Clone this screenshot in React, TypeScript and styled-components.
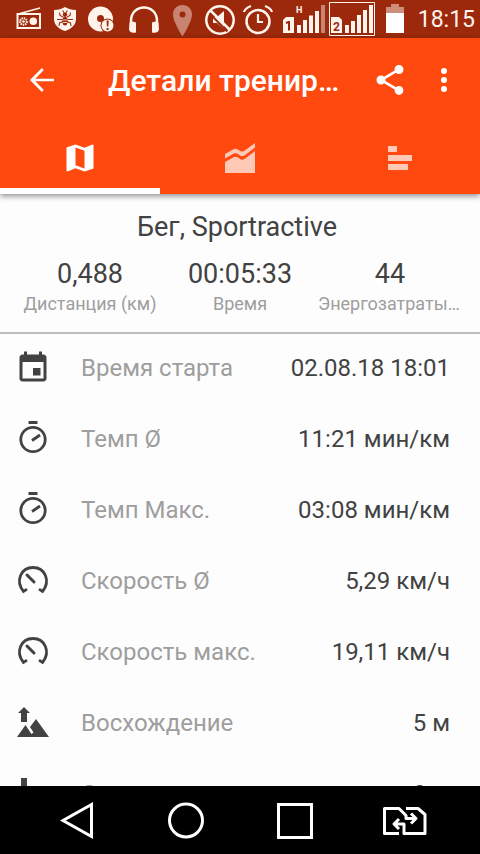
import React from "react";
import styled, { createGlobalStyle } from "styled-components";

const GlobalStyle = createGlobalStyle`
  * { box-sizing: border-box; }
  html, body { margin: 0; padding: 0; }
  body { font-family: Roboto, "Noto Sans", sans-serif; background: #fff; }
  button { font: inherit; color: inherit; background: none; border: 0; padding: 0; margin: 0; cursor: pointer; }
  svg { display: block; flex: none; }
`;

const Screen = styled.div`
  display: flex;
  flex-direction: column;
  height: 100vh;
  overflow: hidden;
  background: #fdfdfd;
  color: #424242;
`;

const StatusBar = styled.div`
  flex: none;
  display: flex;
  align-items: center;
  justify-content: space-between;
  height: 38px;
  padding: 0 5px 0 12px;
  background: #9c290b;
  color: #fff4ec;
`;

const StatusIcons = styled.div`
  display: flex;
`;

const Clock = styled.time`
  padding-top: 2px;
  font-size: 23px;
  line-height: 36px;
`;

const Header = styled.header`
  flex: none;
  position: relative;
  background: #ff490f;
  color: #fff;
  box-shadow: 0 2px 6px rgba(0, 0, 0, 0.45);
`;

const Toolbar = styled.div`
  display: flex;
  align-items: center;
  height: 84px;
  padding: 0 9px 0 15px;
`;

const IconButton = styled.button`
  flex: none;
  display: grid;
  place-items: center;
  width: 54px;
  height: 54px;
`;

const Title = styled.h1`
  flex: 1;
  min-width: 0;
  margin: 0 18px 0 39px;
  padding-top: 2px;
  font-size: 30px;
  line-height: 36px;
  font-weight: 500;
  white-space: nowrap;
  overflow: hidden;
  text-overflow: ellipsis;
`;

const Tabs = styled.div`
  display: grid;
  grid-template-columns: repeat(3, 1fr);
  height: 72px;
`;

const Tab = styled.button<{ $active?: boolean }>`
  display: grid;
  place-items: center;
  border-top: 6px solid transparent;
  border-bottom: 6px solid ${(p) => (p.$active ? "#fff" : "transparent")};

  svg { opacity: ${(p) => (p.$active ? 1 : 0.7)}; }
`;

const Summary = styled.section`
  flex: none;
  padding: 15px 0 16px;
  border-bottom: 2px solid #bdbdbd;
  text-align: center;
`;

const SummaryTitle = styled.h2`
  margin: 0 0 11px;
  padding-right: 6px;
  font-size: 27px;
  line-height: 36px;
  font-weight: 400;
`;

const Stats = styled.dl`
  display: grid;
  grid-template-columns: repeat(3, minmax(0, 1fr));
  margin: 0;
  padding: 0 15px;
`;

const Stat = styled.div`
  display: flex;
  flex-direction: column-reverse;
  min-width: 0;
`;

const StatLabel = styled.dt`
  font-size: 18px;
  line-height: 24px;
  color: #9e9e9e;
  padding: 0 3px;
  white-space: nowrap;
  overflow: hidden;
  text-overflow: ellipsis;
`;

const StatValue = styled.dd`
  margin: 0;
  font-size: 27px;
  line-height: 36px;
`;

const Details = styled.dl`
  flex: 1;
  min-height: 0;
  margin: 0;
  overflow: hidden;
`;

const DetailRow = styled.div`
  display: flex;
  align-items: center;
  height: 71px;
  padding: 0 30px 4px 15px;
  font-size: 24px;
  line-height: 36px;
`;

const DetailLabel = styled.dt`
  flex: 1;
  margin-left: 30px;
  color: #9e9e9e;
`;

const DetailValue = styled.dd`
  margin: 0;
`;

const NavBar = styled.nav`
  flex: none;
  display: grid;
  grid-template-columns: repeat(4, 1fr);
  height: 68px;
  padding: 0 22px;
  background: #000;
  color: #fff;
`;

const NavButton = styled.button`
  display: grid;
  place-items: center;
`;

type StatusProps = { x: number; w: number; children: React.ReactNode };

const StatusIcon = ({ x, w, children }: StatusProps) => (
  <svg width={w} height={38} viewBox={`${x} 0 ${w} 38`} fill="currentColor" aria-hidden="true">
    {children}
  </svg>
);

const stroke = (width: number) => ({ fill: "none", stroke: "currentColor", strokeWidth: width });

const StatusGlyphs = () => (
  <StatusIcons>
    <StatusIcon x={12} w={35}>
      <path d="M17.500 14h22.500v14h-22.500z" {...stroke(2)} />
      <path d="M20 13.500L40 8" {...stroke(1.500)} />
      <circle cx="23.500" cy="21.500" r="3.300" {...stroke(2)} strokeDasharray="1.500 .7" />
      <circle cx="23.500" cy="21.500" r="1.300" />
      <circle cx="33.300" cy="21.300" r="3.800" />
    </StatusIcon>
    <StatusIcon x={47} w={37}>
      <path d="M65 7c3 2 7 3 11 3v9c0 6-5 10-11 12-6-2-11-6-11-12v-9c4 0 8-1 11-3z" />
      <g stroke="#9c290b" fill="none" strokeWidth="1.100">
        <path d="M64 12.500l-1.500-2M66 12.500l1.500-2M63 17l-3-1.500-.5-3M67 17l3-1.500.5-3M62.500 19.500h-5.500M67.500 19.500h5.500M63 21.500l-3.500 1.500-.5 3M67 21.500l3.500 1.500.5 3" />
      </g>
      <ellipse cx="65" cy="21" rx="2.600" ry="4.500" fill="#9c290b" />
      <circle cx="65" cy="14.500" r="2.200" fill="#9c290b" />
      <path d="M63 20h4M63 22.500h4" stroke="#fff4ec" strokeWidth=".8" />
    </StatusIcon>
    <StatusIcon x={84} w={38}>
      <path fillRule="evenodd" d="M100.500 6.500a12.500 12.500 0 1 0 0 25 12.500 12.500 0 0 0 0-25zm0 8.500a3.500 3.500 0 1 1 0 7 3.500 3.500 0 0 1 0-7z" />
      <circle cx="107.500" cy="25.500" r="7" fill="#9c290b" />
      <circle cx="107.500" cy="25.500" r="6" />
      <path d="M106.500 20.500h2.200l-.4 6h-1.400zM106.600 28h2v2h-2z" fill="#9c290b" />
    </StatusIcon>
    <StatusIcon x={122} w={45}>
      <path d="M131 25v-4c0-18 26-18 26 0v4" {...stroke(2.500)} />
      <path d="M129.500 23c3-2 6-1 6.500 0v9.500c-4 1-7-.5-7-3.500zM158.500 23c-3-2-6-1-6.500 0v9.500c4 1 7-.5 7-3.500z" />
    </StatusIcon>
    <StatusIcon x={167} w={32}>
      <path fillRule="evenodd" opacity=".45" d="M182.500 5c-5.500 0-9.500 4-9.500 9.500 0 7 9.500 22 9.500 22s9.500-15 9.500-22c0-5.500-4-9.500-9.500-9.500zm0 6.500a3 3 0 1 1 0 6 3 3 0 0 1 0-6z" />
    </StatusIcon>
    <StatusIcon x={199} w={41}>
      <circle cx="220" cy="20" r="13.700" {...stroke(2.500)} />
      <path d="M213 17h4l7-6v18l-7-6h-4z" />
      <path d="M209.500 13.500l18 18" stroke="#9c290b" strokeWidth="2" />
      <path d="M210.500 10.500l19 19" {...stroke(2.500)} />
    </StatusIcon>
    <StatusIcon x={240} w={40}>
      <circle cx="258" cy="21.500" r="11.500" {...stroke(2.500)} />
      <path d="M258 14v8h5M244 12c1-3 4-5 7-6M272 12c-1-3-4-5-7-6" {...stroke(2.200)} />
    </StatusIcon>
    <StatusIcon x={280} w={47}>
      <path d="M283 20l3-3h8v16h-11z" />
      <path d="M286 23l2.500-1h.5v8.500" fill="none" stroke="#9c290b" strokeWidth="2" />
      <text x="296" y="13" fontSize="9" fontWeight="700">H</text>
      <path d="M297 25h4v8h-4zM303 20h4v13h-4zM309 15.500h4v17.500h-4zM315 11h4v22h-4z" />
      <path d="M321 5h4v28h-4z" opacity=".45" />
    </StatusIcon>
    <StatusIcon x={327} w={50}>
      <path d="M329.500 2.500h45v33h-45z" {...stroke(1)} />
      <path d="M331 17h8l3 3v13h-11z" />
      <text x="333" y="31" fontSize="12" fontWeight="700" fill="#9c290b">2</text>
      <path d="M345 25h4v8h-4zM351 21h4v12h-4zM357 15h4v18h-4zM363 10h4v23h-4zM369 5h4v28h-4z" />
    </StatusIcon>
    <StatusIcon x={377} w={32}>
      <path d="M391 4h8v3h5v6h-18V7h5z" opacity=".5" />
      <path d="M386 13h18v20h-18z" fill="#fff" />
    </StatusIcon>
  </StatusIcons>
);

type IconProps = { size?: number; box?: number; children: React.ReactNode };

const Icon = ({ size = 36, box = 36, children }: IconProps) => (
  <svg width={size} height={size} viewBox={`0 0 ${box} ${box}`} fill="currentColor" aria-hidden="true">
    {children}
  </svg>
);

const BackIcon = () => (
  <Icon box={24}><path d="M20 11.100v1.800H7.600l5.600 5.700L11.900 20 4 12l7.900-8 1.300 1.400-5.600 5.700z" /></Icon>
);

const ShareIcon = () => (
  <Icon box={24}><path d="M18 16.080c-.76 0-1.440.3-1.960.77L8.910 12.700c.05-.23.09-.46.09-.7s-.04-.47-.09-.7l7.050-4.110c.54.5 1.250.81 2.040.81 1.660 0 3-1.340 3-3s-1.340-3-3-3-3 1.340-3 3c0 .24.04.47.09.7L8.040 9.810C7.500 9.310 6.790 9 6 9c-1.660 0-3 1.340-3 3s1.340 3 3 3c.79 0 1.500-.31 2.040-.81l7.120 4.160c-.05.21-.08.43-.08.65 0 1.610 1.310 2.920 2.920 2.920s2.920-1.310 2.920-2.920-1.310-2.920-2.920-2.920z" /></Icon>
);

const MoreIcon = () => (
  <Icon box={24}><circle cx="12" cy="6" r="2" /><circle cx="12" cy="12" r="2" /><circle cx="12" cy="18" r="2" /></Icon>
);

const MapIcon = () => (
  <Icon box={24}><path d="M20.500 3l-.16.030L15 5.100 9 3 3.360 4.900c-.21.070-.36.250-.36.480V20.500c0 .28.220.5.5.5l.16-.030L9 18.900l6 2.100 5.640-1.900c.21-.070.36-.250.36-.480V3.500c0-.28-.22-.5-.5-.5zM15 19l-6-2.110V5l6 2.110V19z" /></Icon>
);

const ChartIcon = () => (
  <Icon>
    <path d="M3 14L11 9.500Q13.500 8 16 9.500L18.500 11.200Q20.500 12 22.500 10.800L33 3v4.500L22.500 15.600Q20.500 17 18.500 15.800L16 14Q13.500 12.500 11 14L3 18.500z" />
    <path d="M3 22L11 17.500Q13.500 16 16 17.500L18.500 19.300Q20.500 20.300 22.500 19L33 11V33H3z" />
  </Icon>
);

const BarsIcon = () => (
  <Icon><path d="M6 6h9v6H6zM6 15h24v6H6zM6 24h20v6H6z" /></Icon>
);

const CalendarIcon = () => (
  <Icon box={24}><path d="M17 12h-5v5h5v-5zM16 1v2H8V1H6v2H5c-1.110 0-1.990.9-1.990 2L3 19c0 1.100.89 2 2 2h14c1.100 0 2-.9 2-2V5c0-1.100-.9-2-2-2h-1V1h-2zm3 18H5V8h14v11z" /></Icon>
);

const TimerIcon = () => (
  <Icon>
    <path d="M13.500 0h9v3h-9z" />
    <circle cx="18" cy="18.500" r="12.200" {...stroke(2.800)} />
    <path d="M17 19.500l8-5.500" {...stroke(2.800)} />
  </Icon>
);

const SpeedIcon = () => (
  <Icon>
    <path d="M12 26.200L8.500 28.500C0 18 6 4.500 18 4.500S36 18 27.500 28.500L24 26.200" {...stroke(2.800)} />
    <path d="M12 12l7 7" {...stroke(3)} strokeLinecap="round" />
  </Icon>
);

const MountainPeaks = () => <path d="M2 32l8.500-12 6 9 2-1.500-3.500-5.500 6-8L34 32z" />;

const AscentIcon = () => (
  <Icon><path d="M9 2l6 6h-3v9H6V8H3z" /><MountainPeaks /></Icon>
);

const DescentIcon = () => (
  <Icon><path d="M6 2h6v9h3l-6 6-6-6h3z" /><MountainPeaks /></Icon>
);

const stats = [
  { label: "Дистанция (км)", value: "0,488" },
  { label: "Время", value: "00:05:33" },
  { label: "Энергозатраты (ккал)", value: "44" },
];

const details = [
  { icon: CalendarIcon, label: "Время старта", value: "02.08.18 18:01" },
  { icon: TimerIcon, label: "Темп Ø", value: "11:21 мин/км" },
  { icon: TimerIcon, label: "Темп Макс.", value: "03:08 мин/км" },
  { icon: SpeedIcon, label: "Скорость Ø", value: "5,29 км/ч" },
  { icon: SpeedIcon, label: "Скорость макс.", value: "19,11 км/ч" },
  { icon: AscentIcon, label: "Восхождение", value: "5 м" },
  { icon: DescentIcon, label: "Спуск", value: "0 м" },
];

export default function App() {
  return (
    <>
      <GlobalStyle />
      <Screen>
        <StatusBar>
          <StatusGlyphs />
          <Clock>18:15</Clock>
        </StatusBar>
        <Header>
          <Toolbar>
            <IconButton aria-label="Назад"><BackIcon /></IconButton>
            <Title>Детали тренировки</Title>
            <IconButton aria-label="Поделиться"><ShareIcon /></IconButton>
            <IconButton aria-label="Ещё"><MoreIcon /></IconButton>
          </Toolbar>
          <Tabs role="tablist">
            <Tab role="tab" aria-selected="true" aria-label="Карта" $active><MapIcon /></Tab>
            <Tab role="tab" aria-selected="false" aria-label="График"><ChartIcon /></Tab>
            <Tab role="tab" aria-selected="false" aria-label="Круги"><BarsIcon /></Tab>
          </Tabs>
        </Header>
        <Summary>
          <SummaryTitle>Бег, Sportractive</SummaryTitle>
          <Stats>
            {stats.map((s) => (
              <Stat key={s.label}>
                <StatLabel>{s.label}</StatLabel>
                <StatValue>{s.value}</StatValue>
              </Stat>
            ))}
          </Stats>
        </Summary>
        <Details>
          {details.map(({ icon: RowIcon, label, value }) => (
            <DetailRow key={label}>
              <RowIcon />
              <DetailLabel>{label}</DetailLabel>
              <DetailValue>{value}</DetailValue>
            </DetailRow>
          ))}
        </Details>
        <NavBar>
          <NavButton aria-label="Назад">
            <Icon size={48} box={48}><path d="M38.500 8.500v32L10 24.500z" {...stroke(3)} /></Icon>
          </NavButton>
          <NavButton aria-label="Домой">
            <Icon size={48} box={48}><circle cx="24" cy="24.500" r="16.500" {...stroke(3)} /></Icon>
          </NavButton>
          <NavButton aria-label="Недавние">
            <Icon size={48} box={48}><path d="M7.500 8.500h33v33h-33z" {...stroke(3)} /></Icon>
          </NavButton>
          <NavButton aria-label="Сменить SIM">
            <Icon size={48} box={48}>
              <g {...stroke(3)} strokeLinejoin="round">
                <path d="M19 37.500H4.500V12.500H19l7 7v3h9M31 17.500l5 5-5 5" />
                <path d="M26 12.500h12l7 6V37.500H24V28h-9M19 23l-5 5 5 5" />
              </g>
            </Icon>
          </NavButton>
        </NavBar>
      </Screen>
    </>
  );
}
